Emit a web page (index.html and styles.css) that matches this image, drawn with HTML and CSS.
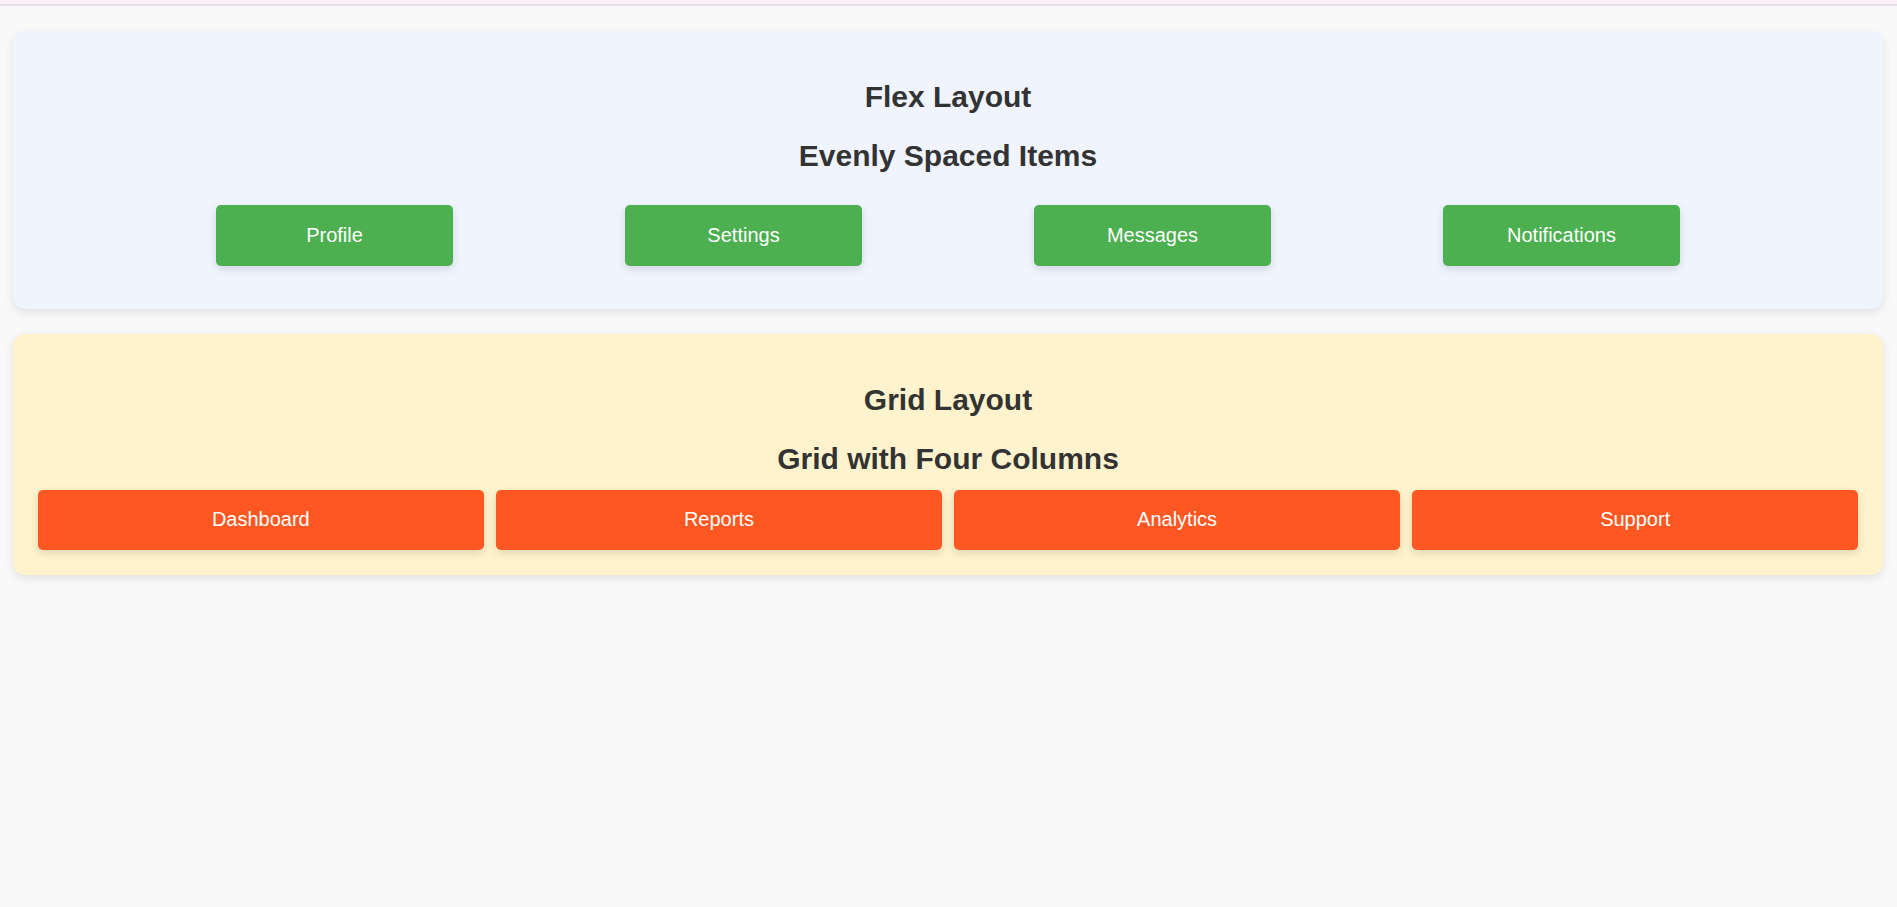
FILE: index.html
```html
<!DOCTYPE html>
<html lang="en">
<head>
<meta charset="utf-8">
<title>Layouts</title>
<link rel="stylesheet" href="styles.css">
</head>
<body>
<div class="topbar"></div>
<main class="page">
  <section class="card card-flex">
    <h2 class="title">Flex Layout</h2>
    <h3 class="subtitle">Evenly Spaced Items</h3>
    <div class="flex-row">
      <div class="btn btn-green">Profile</div>
      <div class="btn btn-green">Settings</div>
      <div class="btn btn-green">Messages</div>
      <div class="btn btn-green">Notifications</div>
    </div>
  </section>
  <section class="card card-grid">
    <h2 class="title">Grid Layout</h2>
    <h3 class="subtitle">Grid with Four Columns</h3>
    <div class="grid-row">
      <div class="btn btn-orange">Dashboard</div>
      <div class="btn btn-orange">Reports</div>
      <div class="btn btn-orange">Analytics</div>
      <div class="btn btn-orange">Support</div>
    </div>
  </section>
</main>
</body>
</html>
```

FILE: styles.css
```css
html, body {
  margin: 0;
  padding: 0;
}

body {
  background: #f9f9f9;
  font-family: "Liberation Sans", Arial, sans-serif;
  color: #333333;
  min-height: 100vh;
}

.topbar {
  height: 4px;
  background: #fdf0fa;
  border-bottom: 2px solid #e2dde6;
}

.page {
  display: flex;
  flex-direction: column;
  gap: 25px;
  padding: 25px 14px 40px 13px;
}

.card {
  border-radius: 12px;
  padding: 25px;
  box-shadow: 0 3px 10px rgba(0, 0, 0, 0.1);
  text-align: center;
}

.card-flex {
  background: #eff4ff;
}

.card-grid {
  background: #fff3cd;
}

.title,
.subtitle {
  font-size: 30px;
  line-height: 34.5px;
  font-weight: bold;
  color: #333333;
  margin: 0;
}

.title {
  margin-top: 24px;
  margin-bottom: 24.5px;
}

.subtitle {
  margin-bottom: 13px;
}

.flex-row {
  display: flex;
  justify-content: space-evenly;
  padding: 18.5px 6px 18px;
}

.grid-row {
  display: grid;
  grid-template-columns: repeat(4, 1fr);
  gap: 12.5px;
}

.btn {
  color: #ffffff;
  font-size: 20px;
  line-height: 23px;
  border-radius: 5px;
  text-align: center;
  box-shadow: 0 3px 8px rgba(0, 0, 0, 0.13);
}

.btn-green {
  background: #4caf50;
  width: 237px;
  padding: 19px 0;
}

.btn-orange {
  background: #ff5722;
  padding: 18.5px 0;
}
```
